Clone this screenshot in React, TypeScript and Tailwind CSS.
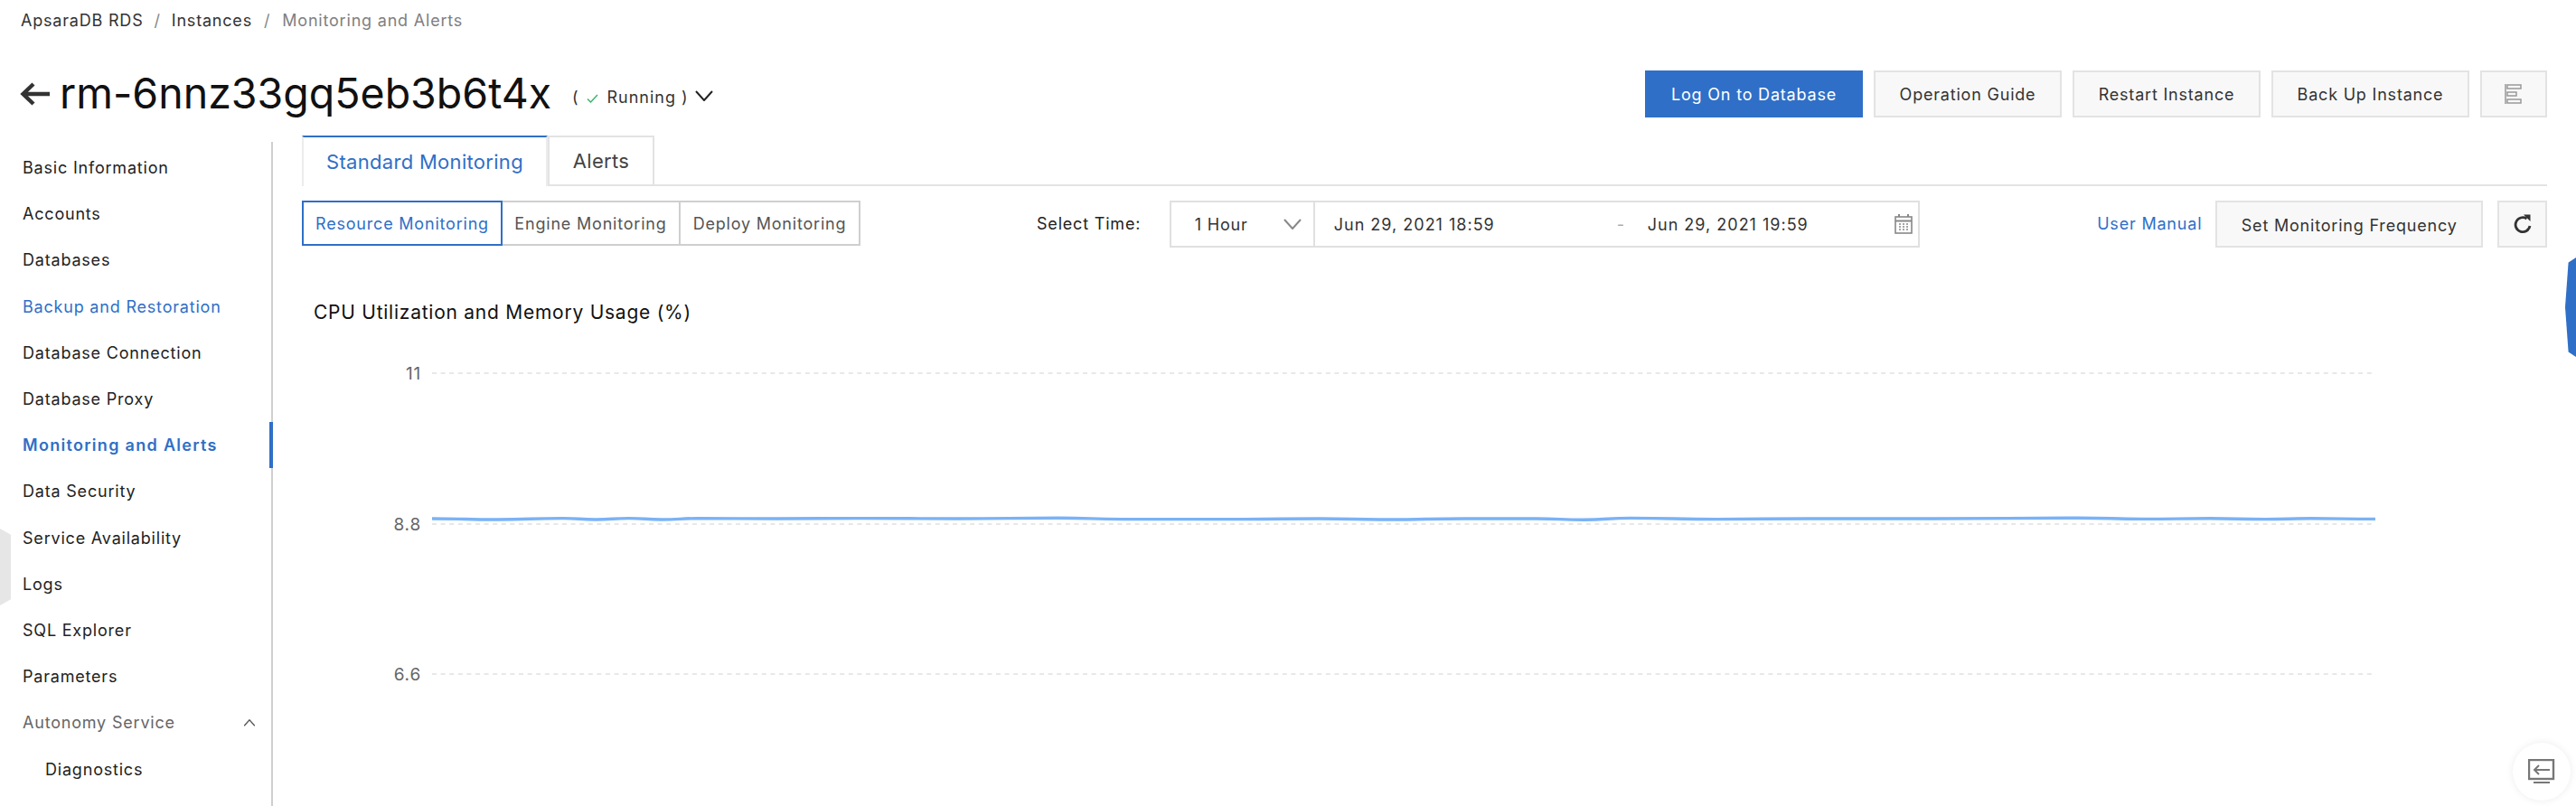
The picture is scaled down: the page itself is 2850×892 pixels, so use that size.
const navItems = [
  'Basic Information',
  'Accounts',
  'Databases',
  'Backup and Restoration',
  'Database Connection',
  'Database Proxy',
  'Monitoring and Alerts',
  'Data Security',
  'Service Availability',
  'Logs',
  'SQL Explorer',
  'Parameters',
];

// CPU series as [x, y] in page pixels
const cpuSeries = [
  [478, 574], [550, 575], [623, 573.6], [659, 575], [696, 573.6], [732, 575], [772, 573.7], [860, 574], [952, 573.6],
  [1060, 574], [1171, 573.2], [1242, 574.6], [1376, 574.6], [1460, 574], [1535, 575], [1620, 574], [1700, 574],
  [1752, 575.2], [1804, 573.4], [1900, 574.6], [2000, 574], [2140, 574], [2300, 573.2], [2372, 574.4], [2445, 573.8],
  [2506, 574.6], [2556, 573.8], [2628, 574.4],
];

function linePath() {
  return cpuSeries
    .map(([x, y], i) => {
      if (i === 0) return `M${x} ${y}`;
      const [px, py] = cpuSeries[i - 1];
      const mid = (px + x) / 2;
      return `C${mid} ${py} ${mid} ${y} ${x} ${y}`;
    })
    .join(' ');
}

function Caret({ color, up = false }: { color: string; up?: boolean }) {
  return (
    <svg width="20" height="12" viewBox="0 0 20 12" fill="none" stroke={color} strokeWidth="2" className={up ? 'rotate-180' : ''}>
      <path d="M1 1L10 11L19 1" />
    </svg>
  );
}

function ActionButton({ children, width }: { children: React.ReactNode; width: string }) {
  return (
    <button className={`${width} h-[52px] border-2 border-[#e3e3e3] bg-[#f8f8f8] text-[18px] text-[#333] flex items-center justify-center`}>
      {children}
    </button>
  );
}

function Chart() {
  const rows = [
    { label: '11', y: 413 },
    { label: '8.8', y: 580 },
    { label: '6.6', y: 746 },
  ];
  return (
    <svg width="2518" height="550" viewBox="334 342 2518 550" className="block">
      {rows.map((r) => (
        <g key={r.label}>
          <line x1="478" x2="2628" y1={r.y} y2={r.y} stroke="#e8e8e8" strokeWidth="2" strokeDasharray="5 4.6" />
          <text x="466" y={r.y + 7} textAnchor="end" fontSize="19" fill="#666">
            {r.label}
          </text>
        </g>
      ))}
      <path d={linePath()} fill="none" stroke="#7ab2f6" strokeWidth="3.4" />
    </svg>
  );
}

export default function App() {
  return (
    <div className="relative w-[2850px] h-[892px] overflow-hidden bg-white font-['Inter',sans-serif] text-[18px] tracking-[0.8px] text-[#333]">
      {/* Breadcrumb */}
      <div className="h-[44px] pl-[23px] flex items-center">
        <span className="text-[#333]">ApsaraDB RDS</span>
        <span className="mx-[12px] text-[#888]">/</span>
        <span className="text-[#333]">Instances</span>
        <span className="mx-[13px] text-[#888]">/</span>
        <span className="text-[#808080]">Monitoring and Alerts</span>
      </div>

      {/* Title row */}
      <div className="h-[106px] pt-[34px] pl-[22px] pr-[32px] flex items-start justify-between">
        <div className="flex items-center h-[52px]">
          <svg width="33" height="26" viewBox="0 0 33 26" fill="none" stroke="#333" strokeWidth="4.4" className="mr-[11px]">
            <path d="M3 13H33M15 2L3.5 13L15 24" />
          </svg>
          <h1 className="text-[46.5px] tracking-normal font-normal text-[#111]">rm-6nnz33gq5eb3b6t4x</h1>
          <div className="ml-[23px] flex items-center text-[#333] mt-[6px]">
            <span>(</span>
            <svg width="13" height="10" viewBox="0 0 13 10" fill="none" stroke="#3fb56b" strokeWidth="1.5" className="mx-[9px] mt-[3px]">
              <path d="M1 5.5L4.5 9L12 1" />
            </svg>
            <span className="tracking-[1px]">Running )</span>
            <span className="ml-[7px] -mt-[2px]">
              <Caret color="#222" />
            </span>
          </div>
        </div>
        <div className="flex items-center gap-[12px]">
          <button className="w-[241px] h-[52px] bg-[#2f6fc7] text-white text-[18px]">Log On to Database</button>
          <ActionButton width="w-[208px]">Operation Guide</ActionButton>
          <ActionButton width="w-[208px]">Restart Instance</ActionButton>
          <ActionButton width="w-[219px]">Back Up Instance</ActionButton>
          <ActionButton width="w-[74px]">
            <svg width="20" height="22" viewBox="0 0 20 22" fill="none" stroke="#999" strokeWidth="1.5">
              <path d="M1 0V22" />
              <rect x="3" y="1" width="15" height="4" />
              <rect x="3" y="9" width="10" height="4" />
              <rect x="3" y="17" width="15" height="4" />
            </svg>
          </ActionButton>
        </div>
      </div>

      <div className="flex">
        {/* Sidebar */}
        <nav className="w-[302px] mt-[7px] h-[800px] border-r-2 border-[#cfcfcf] pt-[3px] shrink-0">
          {navItems.map((item) => {
            const active = item === 'Monitoring and Alerts';
            const blue = item === 'Backup and Restoration';
            return (
              <div
                key={item}
                className={`h-[51.2px] pl-[25px] flex items-center ${active ? 'font-semibold tracking-[1.3px] text-[#2f6fc7] border-r-4 border-[#2f6fc7] -mr-[2px]' : blue ? 'text-[#2f6fc7]' : 'text-[#222]'}`}
              >
                {item}
              </div>
            );
          })}
          <div className="h-[51.2px] pl-[25px] pr-[14px] flex items-center justify-between text-[#666]">
            <span>Autonomy Service</span>
            <span className="scale-[0.65]">
              <Caret color="#555" up />
            </span>
          </div>
          <div className="h-[51.2px] pl-[50px] flex items-center text-[#222]">Diagnostics</div>
        </nav>

        {/* Main */}
        <main className="flex-1 pl-[32px]">
          <div className="w-[2484px]">
            {/* Tabs */}
            <div className="flex h-[56px] border-b-2 border-[#e3e3e3] text-[22px] tracking-[0.3px]">
              <div className="w-[272px] h-[56px] border-t-2 border-x-2 border-t-[#2f6fc7] border-x-[#ececec] bg-white flex items-center justify-center text-[#2f6fc7]">
                Standard Monitoring
              </div>
              <div className="w-[118px] h-[54px] border-2 border-b-0 border-[#e3e3e3] flex items-center justify-center text-[#444]">
                Alerts
              </div>
            </div>

            {/* Toolbar */}
            <div className="mt-[16px] flex items-start">
              <div className="flex h-[50px] w-[618px]">
                <div className="w-[222px] border-2 border-[#2f6fc7] text-[#2f6fc7] flex items-center justify-center">Resource Monitoring</div>
                <div className="w-[197px] border-y-2 border-r-2 border-[#cfcfcf] flex items-center justify-center text-[#555]">Engine Monitoring</div>
                <div className="w-[199px] border-y-2 border-r-2 border-[#cfcfcf] flex items-center justify-center text-[#555]">Deploy Monitoring</div>
              </div>
              <div className="ml-[195px] w-[147px] h-[50px] flex items-center text-[#222]">Select Time:</div>
              <div className="w-[161px] h-[52px] border-2 border-[#e0e0e0] pl-[26px] pr-[13px] flex items-center justify-between">
                <span>1 Hour</span>
                <Caret color="#888" />
              </div>
              <div className="w-[670px] h-[52px] border-2 border-l-0 border-[#e0e0e0] pl-[21px] pr-[6px] flex items-center tracking-[1px]">
                <span className="w-[313px]">Jun 29, 2021 18:59</span>
                <span className="w-[34px] text-[#aaa]">-</span>
                <span className="flex-1">Jun 29, 2021 19:59</span>
                <svg width="20" height="22" viewBox="0 0 20 22" fill="none" stroke="#888" strokeWidth="1.6">
                  <rect x="1" y="3" width="18" height="18" />
                  <path d="M1 7.5H19M5 0V3M15 0V3" strokeWidth="2" />
                  <path d="M5 11H7M9 11H11M13 11H15M5 14H7M9 14H11M13 14H15M5 17H7M9 17H11M13 17H15" />
                </svg>
              </div>
              <span className="ml-[196px] h-[50px] flex items-center text-[#2f6fc7] whitespace-nowrap">User Manual</span>
              <div className="ml-[15px] w-[296px] h-[52px] pt-[3px] border-2 border-[#e3e3e3] bg-[#f8f8f8] flex items-center justify-center text-[#333]">
                Set Monitoring Frequency
              </div>
              <div className="ml-[16px] w-[55px] h-[52px] border-2 border-[#e3e3e3] bg-[#f8f8f8] flex items-center justify-center">
                <svg width="22" height="22" viewBox="0 0 22 22" fill="none" stroke="#333" strokeWidth="2.8">
                  <path d="M15.5 5A8 8 0 1 0 19 13" />
                  <path d="M12 0.5H19.5V8Z" strokeWidth="0" fill="#333" />
                </svg>
              </div>
            </div>

            {/* Chart */}
            <div className="mt-[60px] pl-[13px] h-[24px] flex items-center text-[#111] text-[21px] tracking-[0.75px]">
              CPU Utilization and Memory Usage (%)
            </div>
          </div>
          <div className="-mt-[16px]">
            <Chart />
          </div>
        </main>
      </div>

      {/* Floating handles */}
      <div className="absolute left-0 top-[585px] w-[12px] h-[85px] bg-[#e6e6e6] [clip-path:polygon(0_0,100%_8%,100%_92%,0_100%)]" />
      <div className="absolute right-0 top-[285px] w-[12px] h-[110px] bg-[#2f6fc7] [clip-path:polygon(100%_0,30%_5%,0_50%,30%_95%,100%_100%)]" />
      <div className="absolute left-[2780px] top-[822px] w-[64px] h-[64px] rounded-full bg-white shadow-[0_0_8px_rgba(0,0,0,0.08)] flex items-center justify-center">
        <svg width="30" height="28" viewBox="0 0 30 28" fill="none" stroke="#777" strokeWidth="2">
          <rect x="1" y="1" width="27" height="21" strokeWidth="2.4" />
          <path d="M24 12H7M12 7L7 12L12 17" />
          <path d="M6 26H24" />
        </svg>
      </div>
    </div>
  );
}
